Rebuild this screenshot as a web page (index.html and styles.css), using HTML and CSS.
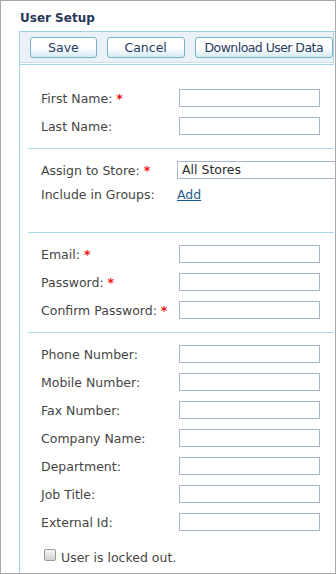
FILE: index.html
```html
<!DOCTYPE html>
<html>
<head>
<meta charset="utf-8">
<link rel="stylesheet" href="styles.css">
</head>
<body>
<div class="frame">
  <div class="title">User Setup</div>
  <div class="panel">
    <div class="toolbar">
      <button class="btn btn-save">Save</button>
      <button class="btn btn-cancel">Cancel</button>
      <button class="btn btn-download">Download User Data</button>
    </div>
    <div class="tb-gap"></div>
    <div class="tb-line"></div>

    <div class="section s1">
      <div class="row"><span class="label">First Name: <span class="req">*</span></span><input class="field" type="text"></div>
      <div class="row"><span class="label">Last Name:</span><input class="field" type="text"></div>
    </div>

    <div class="section s2">
      <div class="row row-s"><span class="label label-s">Assign to Store: <span class="req">*</span></span><div class="select">All Stores</div></div>
      <div class="row row-s"><span class="label label-s">Include in Groups:</span><a class="link" href="#">Add</a></div>
    </div>

    <div class="section s3">
      <div class="row"><span class="label">Email: <span class="req">*</span></span><input class="field" type="text"></div>
      <div class="row"><span class="label">Password: <span class="req">*</span></span><input class="field" type="text"></div>
      <div class="row"><span class="label">Confirm Password: <span class="req">*</span></span><input class="field" type="text"></div>
    </div>

    <div class="section s4">
      <div class="row"><span class="label">Phone Number:</span><input class="field" type="text"></div>
      <div class="row"><span class="label">Mobile Number:</span><input class="field" type="text"></div>
      <div class="row"><span class="label">Fax Number:</span><input class="field" type="text"></div>
      <div class="row"><span class="label">Company Name:</span><input class="field" type="text"></div>
      <div class="row"><span class="label">Department:</span><input class="field" type="text"></div>
      <div class="row"><span class="label">Job Title:</span><input class="field" type="text"></div>
      <div class="row"><span class="label">External Id:</span><input class="field" type="text"></div>
      <div class="check-row"><span class="checkbox"></span><span class="check-label">User is locked out.</span></div>
    </div>
  </div>
</div>
</body>
</html>
```

FILE: styles.css
```css
html, body {
  margin: 0;
  padding: 0;
  background: #ffffff;
}

.frame {
  width: 336px;
  height: 574px;
  box-sizing: border-box;
  border: 1px solid #a9a9a9;
  overflow: hidden;
  background: #ffffff;
  font-family: "DejaVu Sans", Verdana, sans-serif;
  font-size: 12.5px;
  color: #454545;
}

.title {
  padding: 10px 0 6px 19px;
  line-height: 14px;
  font-size: 12px;
  font-weight: bold;
  color: #25375a;
}

.panel {
  margin-left: 18px;
  width: 480px;
  height: 600px;
  border-left: 1px solid #9fd2e2;
  border-top: 1px solid #9fd2e2;
}

.toolbar {
  width: 314px;
  box-sizing: border-box;
  height: 31px;
  padding: 5px 0 0 10px;
  background: #eaf2f7;
  border-right: 1px solid #a9d4e2;
  border-bottom: 1px solid #c8e0ea;
  display: flex;
  align-items: flex-start;
}

.tb-gap {
  width: 314px;
  height: 1px;
  background: #ffffff;
}

.tb-line {
  width: 314px;
  height: 1px;
  background: #a9d5e3;
}

.btn {
  height: 21px;
  box-sizing: border-box;
  margin: 0 10px 0 0;
  padding: 0;
  border: 1px solid #78b4c9;
  border-radius: 3px;
  background: linear-gradient(#ffffff 0%, #ffffff 50%, #d6eaf3 100%);
  font-family: "DejaVu Sans", Verdana, sans-serif;
  font-size: 12.5px;
  line-height: 19px;
  color: #273b5c;
  text-align: center;
}

.btn-save { width: 67px; }
.btn-cancel { width: 78px; margin-right: 10px; }
.btn-download { width: 139px; letter-spacing: -0.55px; margin-right: 0; }

.section {
  margin-left: 8px;
  width: 306px;
  box-sizing: border-box;
}

.s2, .s3, .s4 {
  border-top: 1px solid #a9d8e6;
}

.s1 { padding: 19px 0 8px 0; }
.s2 { padding: 9px 0 26px 0; }
.s3 { padding: 7px 0 8px 0; }
.s4 { padding: 7px 0 0 0; }

.row {
  display: flex;
  align-items: center;
  height: 28px;
}

.row-s {
  height: 24px;
}

.label {
  width: 151px;
  padding-left: 13px;
  box-sizing: border-box;
  flex: none;
  white-space: nowrap;
  color: #454545;
}

.label-s {
  width: 149px;
}

.req {
  color: #ee1111;
  font-weight: bold;
}

.field {
  width: 141px;
  height: 18px;
  box-sizing: border-box;
  margin: 0;
  padding: 0 3px;
  border: 1px solid #a7b6ca;
  border-radius: 0;
  background: #ffffff;
  outline: none;
}

.select {
  width: 200px;
  height: 18px;
  box-sizing: border-box;
  flex: none;
  padding-left: 4px;
  border: 1px solid #a7b6ca;
  line-height: 16px;
  color: #2b2b2b;
  white-space: nowrap;
}

.link {
  color: #1c5a8c;
  text-decoration: underline;
}

.check-row {
  display: flex;
  align-items: center;
  height: 28px;
  margin-top: 5px;
  padding-left: 16px;
}

.checkbox {
  width: 12px;
  height: 12px;
  box-sizing: border-box;
  border: 1px solid #9a9a9a;
  border-radius: 2px;
  background: linear-gradient(#f6f6f6, #d2d2d2);
  flex: none;
  margin-top: -1px;
}

.check-label {
  margin-left: 5px;
  padding-top: 4px;
  color: #454545;
}
```
